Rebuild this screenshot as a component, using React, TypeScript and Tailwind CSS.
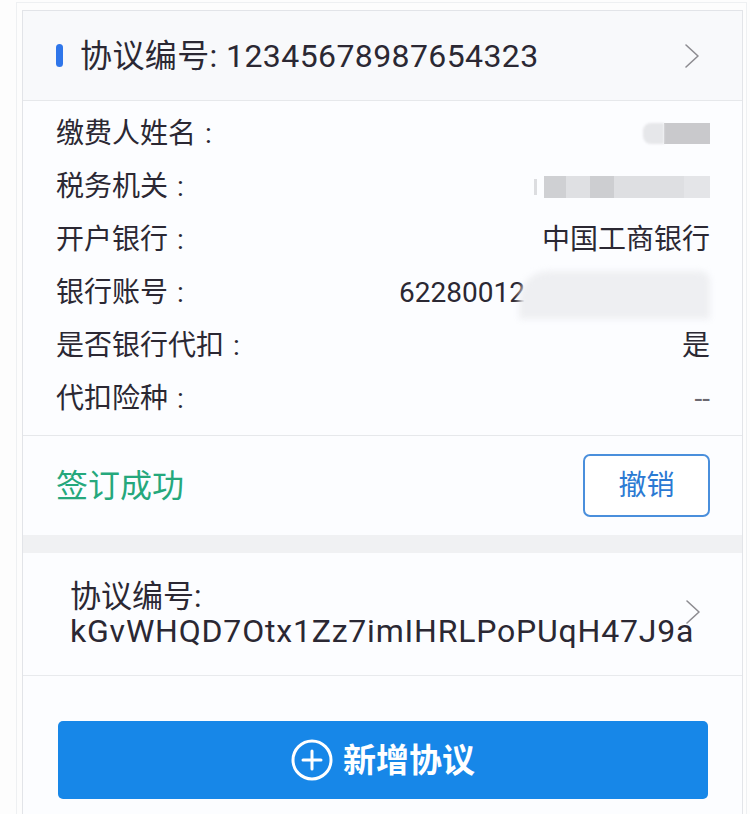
import React from "react";

const rows: { label: string; value: React.ReactNode }[] = [
  {
    label: "缴费人姓名",
    value: (
      <div className="flex h-[22px] items-center">
        <div className="h-[21px] w-[21px] rounded-l-[8px] bg-[#e6e7ea] blur-[1px]" />
        <div className="h-[21px] w-[46px] bg-[#c9c9cc]" />
      </div>
    ),
  },
  {
    label: "税务机关",
    value: (
      <div className="flex h-[22px] items-center">
        <div className="h-[16px] w-[3px] bg-[#dcdde0]" />
        <div className="ml-[7px] h-[22px] w-[22px] bg-[#cfd0d3]" />
        <div className="h-[22px] w-[24px] bg-[#dfe0e3]" />
        <div className="h-[22px] w-[24px] bg-[#cdced1]" />
        <div className="h-[22px] w-[70px] bg-[#dedfe2]" />
        <div className="h-[22px] w-[26px] bg-[#e4e5e8]" />
      </div>
    ),
  },
  { label: "开户银行", value: <span>中国工商银行</span> },
  {
    label: "银行账号",
    value: (
      <div className="flex items-center">
        <span>62280012</span>
        <div className="-ml-[6px] mt-[4px] h-[48px] w-[191px] rounded-tl-[30px] rounded-tr-[10px] bg-[#eeeff2] blur-[3px]" />
      </div>
    ),
  },
  { label: "是否银行代扣", value: <span>是</span> },
  { label: "代扣险种", value: <span className="text-[#6b6870]">--</span> },
];

function Chevron({ className }: { className?: string }) {
  return (
    <svg width="16" height="26" viewBox="0 0 16 26" className={className} fill="none">
      <polyline points="2,2 14,13 2,24" stroke="#8d8c91" strokeWidth="1.6" strokeLinecap="round" strokeLinejoin="round" />
    </svg>
  );
}

export default function App() {
  return (
    <div className="min-h-[814px] w-[750px] overflow-hidden bg-[#fdfdfd] font-['Roboto','Noto_Sans_CJK_SC',sans-serif] text-[#2b2833]">
      <div className="ml-[16px] mt-[2px] w-[731px] border-l border-r border-t border-[#eef0f2] pl-[5px] pr-[3px] pt-[7px]">
        <div className="min-h-[806px] border-l border-r border-t border-[#e2e4e8] bg-[#fcfdff]">
          {/* header */}
          <div className="flex h-[90px] items-center border-b border-[#e6e8eb] bg-[#f8f9fb] pl-[33px] pr-[42px]">
            <div className="h-[23px] w-[7px] rounded-full bg-[#2f76ea]" />
            <div className="ml-[17px] flex-1 text-[32px] leading-none tracking-[0.4px]">
              协议编号: 12345678987654323
            </div>
            <Chevron />
          </div>

          {/* rows */}
          <div className="border-b border-[#e6e8eb] pb-[10px] pl-[33px] pr-[32px] pt-[6px]">
            {rows.map((r) => (
              <div key={r.label} className="flex h-[53px] items-center justify-between text-[28px] leading-none">
                <span>
                  {r.label}
                  <span className="ml-[9px]">:</span>
                </span>
                <div className="flex items-center">{r.value}</div>
              </div>
            ))}
          </div>

          {/* status */}
          <div className="flex h-[99px] items-center justify-between pl-[33px] pr-[32px]">
            <span className="text-[32px] leading-none text-[#25a87c]">签订成功</span>
            <button className="flex h-[63px] w-[127px] items-center justify-center rounded-[7px] border-2 border-[#4a8fdc] bg-white text-[28px] leading-none text-[#2b7ad3]">
              撤销
            </button>
          </div>

          <div className="h-[18px] bg-[#f0f1f3]" />

          {/* second agreement */}
          <div className="relative flex h-[123px] flex-col justify-center border-b border-[#e8eaed] pl-[47px]">
            <div className="text-[31px] leading-[34px]">协议编号:</div>
            <div className="text-[32px] leading-[34px] tracking-[0.8px]">kGvWHQD7Otx1Zz7imIHRLPoPUqH47J9a</div>
            <Chevron className="absolute right-[41px] top-[46px]" />
          </div>

          {/* add button */}
          <div className="pl-[35px] pr-[34px] pt-[45px]">
            <button className="flex h-[78px] w-full items-center justify-center gap-[10px] rounded-[5px] bg-[#1787e8] text-white">
              <svg width="42" height="42" viewBox="0 0 42 42" fill="none">
                <circle cx="21" cy="21" r="19" stroke="white" strokeWidth="3" />
                <line x1="21" y1="12" x2="21" y2="30" stroke="white" strokeWidth="3" strokeLinecap="round" />
                <line x1="12" y1="21" x2="30" y2="21" stroke="white" strokeWidth="3" strokeLinecap="round" />
              </svg>
              <span className="text-[33px] font-bold leading-none">新增协议</span>
            </button>
          </div>
        </div>
      </div>
    </div>
  );
}
